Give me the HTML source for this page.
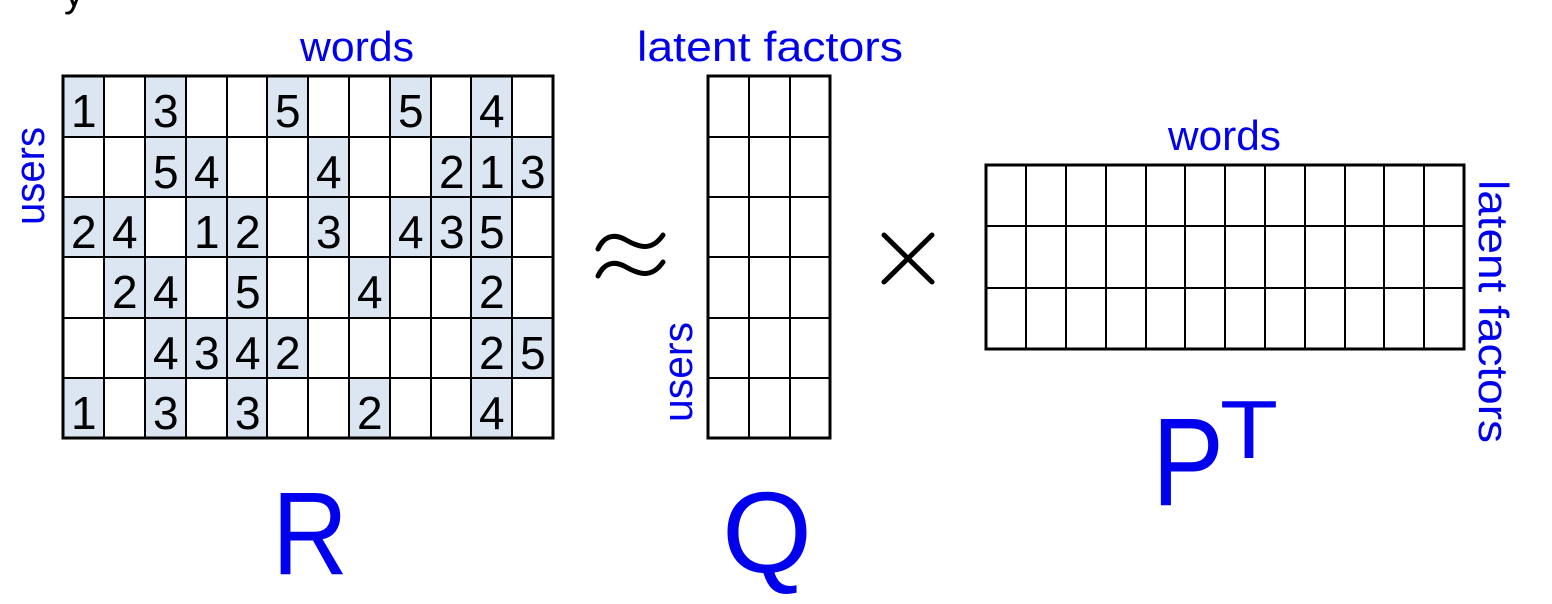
<!DOCTYPE html>
<html><head><style>html,body{margin:0;padding:0;background:#fff;width:1552px;height:604px;overflow:hidden}</style></head>
<body>
<svg width="1552" height="604" xmlns="http://www.w3.org/2000/svg" font-family="Liberation Sans, sans-serif">
<text x="64" y="6" font-size="40" fill="#000">y</text>
<g id="R">
<script></script>
</g>
<!-- R matrix shading -->
<g fill="#dce6f2">
<rect x="63" y="76" width="41" height="61"/><rect x="145" y="76" width="41" height="61"/><rect x="267" y="76" width="41" height="61"/><rect x="390" y="76" width="41" height="61"/><rect x="471" y="76" width="41" height="61"/>
<rect x="145" y="137" width="41" height="60"/><rect x="186" y="137" width="41" height="60"/><rect x="308" y="137" width="41" height="60"/><rect x="431" y="137" width="41" height="60"/><rect x="471" y="137" width="41" height="60"/><rect x="512" y="137" width="41" height="60"/>
<rect x="63" y="197" width="82" height="60"/><rect x="186" y="197" width="81" height="60"/><rect x="308" y="197" width="41" height="60"/><rect x="390" y="197" width="122" height="60"/>
<rect x="104" y="257" width="82" height="61"/><rect x="227" y="257" width="40" height="61"/><rect x="349" y="257" width="41" height="61"/><rect x="471" y="257" width="41" height="61"/>
<rect x="145" y="318" width="163" height="60"/><rect x="471" y="318" width="82" height="60"/>
<rect x="63" y="378" width="41" height="60"/><rect x="145" y="378" width="41" height="60"/><rect x="227" y="378" width="40" height="60"/><rect x="349" y="378" width="41" height="60"/><rect x="471" y="378" width="41" height="60"/>
</g>
<g stroke="#000" stroke-width="2" fill="none">
<path d="M104 76V438M145 76V438M186 76V438M227 76V438M267 76V438M308 76V438M349 76V438M390 76V438M431 76V438M471 76V438M512 76V438"/>
<path d="M63 137H553M63 197H553M63 257H553M63 318H553M63 378H553"/>
<rect x="63" y="76" width="490" height="362" stroke-width="3"/>
<path d="M749 76V438M790 76V438M708 137H830M708 197H830M708 257H830M708 318H830M708 378H830"/>
<rect x="708" y="76" width="122" height="362" stroke-width="3"/>
<path d="M1026 165V349M1066 165V349M1106 165V349M1146 165V349M1185 165V349M1225 165V349M1265 165V349M1305 165V349M1345 165V349M1384 165V349M1424 165V349M986 226H1464M986 288H1464"/>
<rect x="986" y="165" width="478" height="184" stroke-width="3"/>
</g>
<g font-size="46" fill="#000">
<text x="71" y="127">1</text><text x="153" y="127">3</text><text x="275" y="127">5</text><text x="398" y="127">5</text><text x="479" y="127">4</text>
<text x="153" y="188">5</text><text x="194" y="188">4</text><text x="316" y="188">4</text><text x="439" y="188">2</text><text x="479" y="188">1</text><text x="520" y="188">3</text>
<text x="71" y="248">2</text><text x="112" y="248">4</text><text x="194" y="248">1</text><text x="235" y="248">2</text><text x="316" y="248">3</text><text x="398" y="248">4</text><text x="439" y="248">3</text><text x="479" y="248">5</text>
<text x="112" y="308">2</text><text x="153" y="308">4</text><text x="235" y="308">5</text><text x="357" y="308">4</text><text x="479" y="308">2</text>
<text x="153" y="369">4</text><text x="194" y="369">3</text><text x="235" y="369">4</text><text x="275" y="369">2</text><text x="479" y="369">2</text><text x="520" y="369">5</text>
<text x="71" y="429">1</text><text x="153" y="429">3</text><text x="235" y="429">3</text><text x="357" y="429">2</text><text x="479" y="429">4</text>
</g>
<g fill="#0000ee" font-size="42">
<text x="300" y="61" textLength="114" lengthAdjust="spacingAndGlyphs">words</text>
<text x="637" y="61" textLength="266" lengthAdjust="spacingAndGlyphs">latent factors</text>
<text x="1168" y="150" textLength="113" lengthAdjust="spacingAndGlyphs">words</text>
<text transform="translate(44,225) rotate(-90)" textLength="98" lengthAdjust="spacingAndGlyphs">users</text>
<text transform="translate(692,422) rotate(-90)" textLength="100" lengthAdjust="spacingAndGlyphs">users</text>
<text transform="translate(1479,180) rotate(90)" textLength="263" lengthAdjust="spacingAndGlyphs">latent factors</text>
<text x="272" y="574" font-size="118" textLength="76" lengthAdjust="spacingAndGlyphs">R</text>
<text x="722" y="572" font-size="115" textLength="90" lengthAdjust="spacingAndGlyphs">Q</text>
<text x="1152" y="505" font-size="125" textLength="72" lengthAdjust="spacingAndGlyphs">P</text>
<text x="1220" y="458" font-size="83" textLength="58" lengthAdjust="spacingAndGlyphs">T</text>
</g>
<g stroke="#000" stroke-width="5" fill="none" stroke-linecap="round">
<path d="M598 249C604 236 614 233 626 240C640 248 652 251 663 235"/>
<path d="M598 276C604 263 614 260 626 267C640 275 652 278 663 262"/>
<path d="M884 235L932 282M932 235L884 282"/>
</g>
</svg>
</body></html>
